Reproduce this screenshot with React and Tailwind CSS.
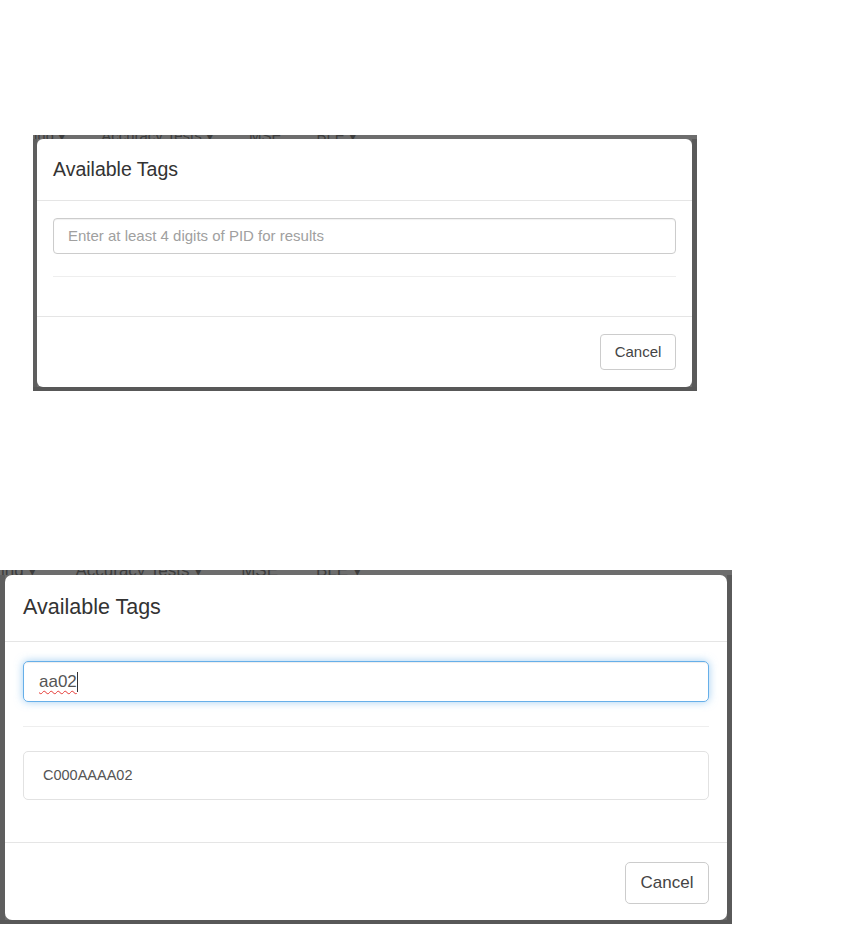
import React from "react";

const font = { fontFamily: '"Liberation Sans", Arial, Helvetica, sans-serif' };

// strip of the page that shows above the modal, mostly cut off
const NavStrip = ({ big }) => (
  <div className={big ? "h-[5px] overflow-hidden bg-[#6d6d6d]" : "h-[4px] overflow-hidden bg-[#6d6d6d]"}>
    <div
      className={
        big
          ? "flex items-end h-[5px] text-[17px] leading-[17px] text-[#3d3d3d] whitespace-nowrap"
          : "flex items-end h-[4px] text-[15px] leading-[15px] text-[#3d3d3d] whitespace-nowrap"
      }
    >
      <div className={big ? "flex gap-[38px] -mb-[4px] pl-[1px]" : "flex gap-[35px] -mb-[4px] pl-[1px]"}>
        <span>ind ▾</span>
        <span>Accuracy Tests ▾</span>
        <span>MSE</span>
        <span>BLE ▾</span>
      </div>
    </div>
  </div>
);

const SmallModal = () => (
  <div className="ml-[33px] mt-[135px] w-[664px] bg-[#6d6d6d] flex flex-col">
    <NavStrip />
    <div className="flex">
      <div className="w-[4px] bg-[#5e5e5e]" />
      <div className="w-[655px] h-[248px] bg-white rounded-[6px] flex flex-col">
        <div className="h-[62px] border-b border-[#e5e5e5] pl-[16px] flex items-center">
          <h4 className="text-[19.5px] text-[#333] leading-none">Available Tags</h4>
        </div>
        <div className="px-[16px] pt-[17px] pb-[17px] flex flex-col">
          <div className="h-[36px] border border-[#cccccc] rounded-[4px] pl-[14px] flex items-center shadow-[inset_0_1px_1px_rgba(0,0,0,0.06)]">
            <span className="text-[15px] text-[#a0a0a0]">Enter at least 4 digits of PID for results</span>
          </div>
          <div className="mt-[22px] mb-[22px] h-px bg-[#eeeeee]" />
        </div>
        <div className="border-t border-[#e5e5e5] flex justify-end pt-[17px] pr-[16px]">
          <div className="w-[76px] h-[36px] border border-[#cccccc] rounded-[4px] flex items-center justify-center text-[15px] text-[#444]">
            Cancel
          </div>
        </div>
      </div>
      <div className="w-[5px] bg-[#5a5a5a]" />
    </div>
    <div className="h-[4px] bg-[#585858]" />
  </div>
);

const BigModal = () => (
  <div className="mt-[179px] w-[732px] bg-[#6d6d6d] flex flex-col">
    <NavStrip big />
    <div className="flex">
      <div className="w-[5px] bg-[#5e5e5e]" />
      <div className="w-[722px] h-[345px] bg-white rounded-[7px] flex flex-col">
        <div className="h-[67px] border-b border-[#e5e5e5] pl-[18px] flex items-center">
          <h4 className="text-[21.5px] text-[#333] leading-none">Available Tags</h4>
        </div>
        <div className="px-[18px] pt-[19px] pb-[18px] flex flex-col">
          <div className="h-[41px] border border-[#66afe9] rounded-[5px] pl-[15px] flex items-center shadow-[inset_0_1px_1px_rgba(0,0,0,0.075),0_0_8px_rgba(102,175,233,0.6)]">
            <span className="text-[17px] text-[#555] underline decoration-wavy decoration-[#e53935] decoration-1 underline-offset-[3px]">
              aa02
            </span>
            <span className="w-px h-[20px] bg-[#333]" />
          </div>
          <div className="mt-[24px] mb-[24px] h-px bg-[#eeeeee]" />
          <div className="h-[49px] border border-[#e2e2e2] rounded-[5px] pl-[19px] flex items-center mb-[24px]">
            <span className="text-[14.5px] text-[#555]">C000AAAA02</span>
          </div>
        </div>
        <div className="border-t border-[#e5e5e5] flex justify-end pt-[19px] pr-[18px]">
          <div className="w-[84px] h-[42px] border border-[#cccccc] rounded-[5px] flex items-center justify-center text-[17px] text-[#444]">
            Cancel
          </div>
        </div>
      </div>
      <div className="w-[5px] bg-[#5a5a5a]" />
    </div>
    <div className="h-[4px] bg-[#585858]" />
  </div>
);

export default function App() {
  return (
    <div className="w-[845px] h-[925px] bg-white overflow-hidden" style={font}>
      <SmallModal />
      <BigModal />
    </div>
  );
}
